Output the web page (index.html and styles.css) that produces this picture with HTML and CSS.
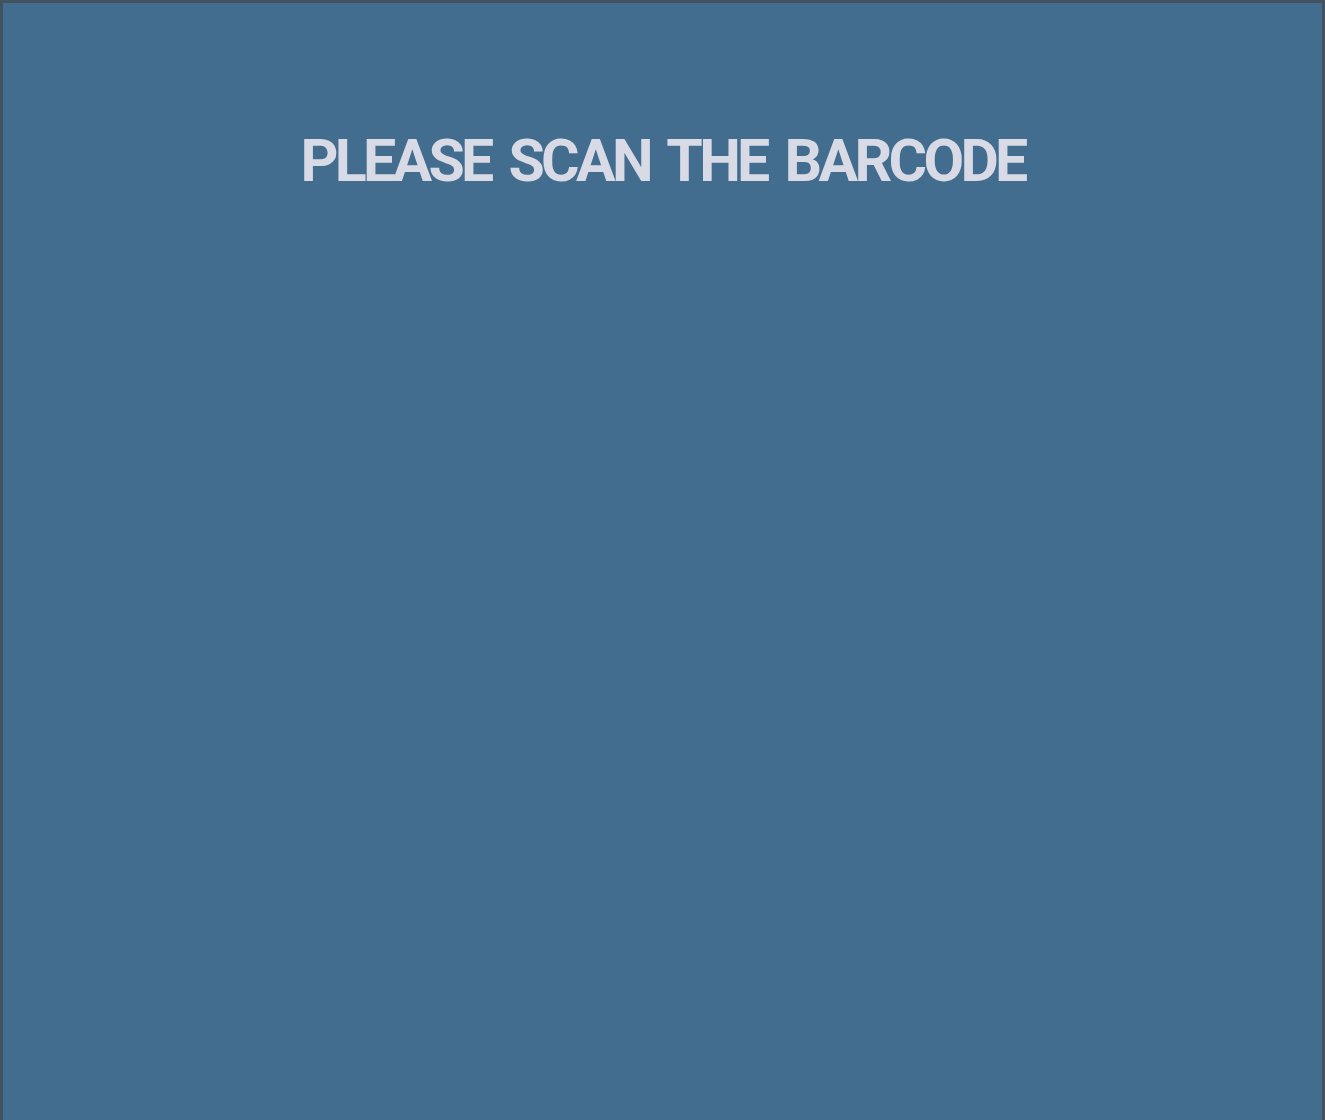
FILE: index.html
```html
<!DOCTYPE html>
<html>
<head>
<meta charset="utf-8">
<link rel="stylesheet" href="styles.css">
</head>
<body>
<div class="screen">
  <h1 class="prompt">PLEASE SCAN THE BARCODE</h1>
</div>
</body>
</html>
```
FILE: styles.css
```css
html, body {
  margin: 0;
  padding: 0;
  background: #436d8f;
}
.screen {
  box-sizing: border-box;
  width: 1325px;
  min-height: 1200px;
  background: #436d8f;
  border: 3px solid #44525f;
  border-bottom: none;
  display: flex;
  flex-direction: column;
  align-items: center;
}
.prompt {
  margin: 120px 0 0 0;
  font-family: "Roboto", "Liberation Sans", sans-serif;
  font-weight: 700;
  font-size: 59px;
  line-height: 76px;
  color: #d8dae6;
  letter-spacing: -3.7px;
  word-spacing: 7px;
}
```
